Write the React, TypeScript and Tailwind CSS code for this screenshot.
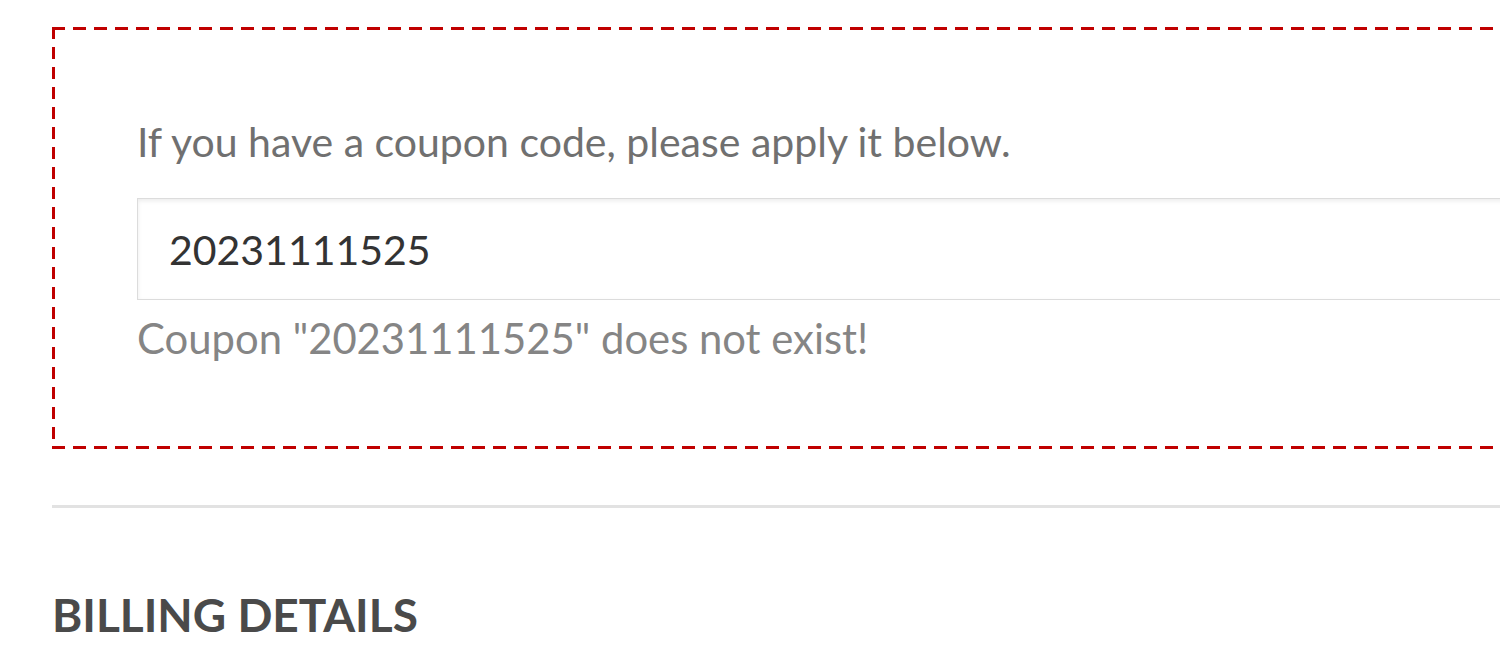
export default function App() {
  return (
    <main className="h-[668px] w-[1500px] overflow-hidden bg-white font-['Lato',sans-serif]">
      <div className="w-[1700px] pl-[52px] pt-[27px]">
        {/* dashed coupon box, dashes drawn with gradients to get the long 13/8 pattern */}
        <div className="pl-[85px] pr-[85px] pt-[91px] pb-[87px] [background:repeating-linear-gradient(90deg,#c00000_0_13px,transparent_13px_21px)_top_left/100%_3px_no-repeat,repeating-linear-gradient(90deg,#c00000_0_13px,transparent_13px_21px)_bottom_left/100%_3px_no-repeat,repeating-linear-gradient(180deg,#c00000_0_12px,transparent_12px_20px)_top_left/3px_100%_no-repeat]">
          <p className="text-[41px] leading-[48px] text-[#707070]">If you have a coupon code, please apply it below.</p>
          <input
            defaultValue="20231111525"
            className="mt-[32px] h-[102px] w-full border border-[#dcdcdc] bg-white pl-[31px] text-[41px] text-[#333] shadow-[inset_0_2px_4px_rgba(0,0,0,0.08)] outline-none"
          />
          <p className="mt-[14px] text-[41.8px] leading-[48px] text-[#858585]">Coupon "20231111525" does not exist!</p>
        </div>
        <hr className="mt-[56px] border-t-[3px] border-[#e2e2e2]" />
        <h3 className="mt-[79px] text-[46px] leading-[56px] font-bold text-[#4a4a4a]">BILLING DETAILS</h3>
      </div>
    </main>
  );
}
